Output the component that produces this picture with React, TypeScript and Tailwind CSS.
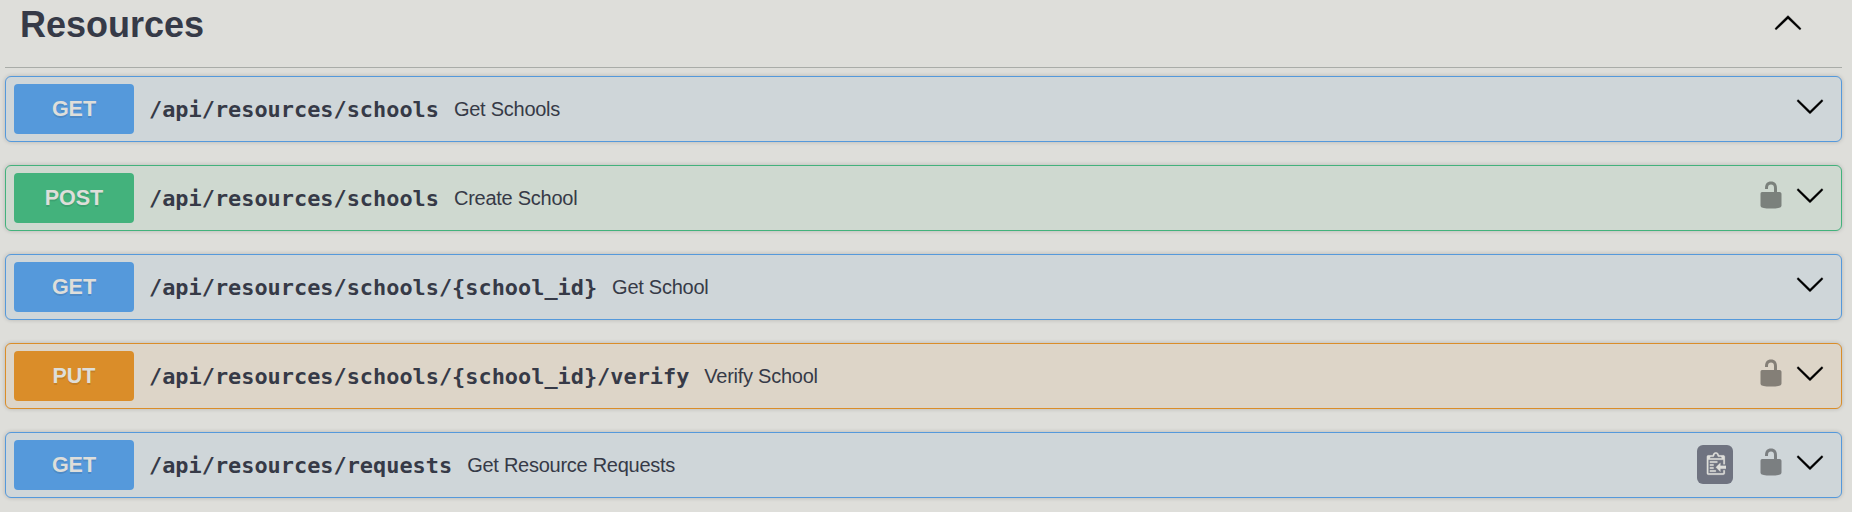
import React from 'react';

type Method = 'GET' | 'POST' | 'PUT';

interface Operation {
  method: Method;
  path: string;
  summary: string;
  locked?: boolean;
  copy?: boolean;
}

const operations: Operation[] = [
  { method: 'GET', path: '/api/resources/schools', summary: 'Get Schools' },
  { method: 'POST', path: '/api/resources/schools', summary: 'Create School', locked: true },
  { method: 'GET', path: '/api/resources/schools/{school_id}', summary: 'Get School' },
  { method: 'PUT', path: '/api/resources/schools/{school_id}/verify', summary: 'Verify School', locked: true },
  { method: 'GET', path: '/api/resources/requests', summary: 'Get Resource Requests', locked: true, copy: true },
];

const rowStyles: Record<Method, string> = {
  GET: 'border-[#5599db] bg-[#cfd6d9]',
  POST: 'border-[#43b27c] bg-[#cfd9d0]',
  PUT: 'border-[#da8d29] bg-[#ddd5c8]',
};

const badgeStyles: Record<Method, string> = {
  GET: 'bg-[#5599db]',
  POST: 'bg-[#43b27c]',
  PUT: 'bg-[#da8d29]',
};

function ArrowDown() {
  return (
    <svg viewBox="0 0 20 20" className="size-[30px] fill-black stroke-black stroke-[0.2]">
      <path d="M17.418 6.109c.272-.268.709-.268.979 0s.271.701 0 .969l-7.908 7.83c-.27.268-.707.268-.979 0l-7.908-7.83c-.27-.268-.27-.701 0-.969.271-.268.709-.268.979 0L10 13.25z" />
    </svg>
  );
}

function ArrowUp() {
  return (
    <svg viewBox="0 0 20 20" className="size-[30px] fill-black stroke-black stroke-[0.2]">
      <path d="M17.418 14.908c.272.268.709.268.979 0s.271-.701 0-.969l-7.908-7.83c-.27-.268-.707-.268-.979 0l-7.908 7.83c-.27.268-.27.701 0 .969.271.268.709.268.979 0L10 7.767z" />
    </svg>
  );
}

function Unlocked() {
  return (
    <svg viewBox="0 0 20 20" className="size-[30px] fill-black opacity-40">
      <path d="M15.8 8H14V5.6C14 2.703 12.665 1 10 1 7.334 1 6 2.703 6 5.6V6h2v-.801C8 3.754 8.797 3 10 3c1.203 0 2 .754 2 2.199V8H4c-.553 0-1 .646-1 1.199V17c0 .549.428 1.139.951 1.307l1.197.387C5.672 18.861 6.55 19 7.1 19h5.8c.549 0 1.428-.139 1.951-.307l1.196-.387c.524-.167.953-.757.953-1.306V9.199C17 8.646 16.352 8 15.8 8z" />
    </svg>
  );
}

function CopyButton() {
  return (
    <button className="mr-[23px] mt-[4px] flex h-[39px] w-9 items-center justify-center rounded-md bg-[#6f7380]">
      <svg viewBox="0 0 15 16" className="h-6 w-[22.5px] fill-[#dededa] stroke-[#dededa] stroke-[0.15]">
        <path
          transform="translate(-.1 .2)"
          d="M4 12h4v1H4v-1zm5-6H4v1h5V6zm2 3V7l-3 3 3 3v-2h4V9h-4zM6.5 8H4v1h2.5V8zM4 11h2.5v-1H4v1zm9 1h1v2c-.02.28-.11.52-.3.7-.19.18-.42.28-.7.3H3c-.55 0-1-.45-1-1V3c0-.55.45-1 1-1h3c0-1.11.89-2 2-2 1.11 0 2 .89 2 2h3c.55 0 1 .45 1 1v5h-1V5H3v9h10v-2zM4 4h8c0-.55-.45-1-1-1h-1c-.55 0-1-.45-1-1s-.45-1-1-1-1 .45-1 1-.45 1-1 1H5c-.55 0-1 .45-1 1z"
        />
      </svg>
    </button>
  );
}

function OperationRow({ op }: { op: Operation }) {
  return (
    <div
      className={`flex h-[66px] items-center rounded-md border pl-2 pr-4 shadow-[0_0_4px_rgba(0,0,0,0.19)] ${rowStyles[op.method]}`}
    >
      <div
        className={`flex h-[50px] w-[120px] items-center justify-center rounded-[4px] text-[21.5px] font-bold text-[#dededa] [text-shadow:0_2px_0_rgba(0,0,0,0.1)] ${badgeStyles[op.method]}`}
      >
        {op.method}
      </div>
      <span className="ml-[15px] mt-px whitespace-pre font-['DejaVu_Sans_Mono',monospace] text-[21.9px] font-bold leading-none">
        {op.path}
      </span>
      <span className="ml-[15px] pb-px text-[20px] leading-none tracking-[-0.26px]">{op.summary}</span>
      <div className="ml-auto flex items-center pb-[6px]">
        {op.copy && <CopyButton />}
        {op.locked && <Unlocked />}
        <div className="ml-[9px]">
          <ArrowDown />
        </div>
      </div>
    </div>
  );
}

export default function App() {
  return (
    <main className="h-[512px] overflow-hidden bg-[#dededa] pl-[5px] pr-[10px] font-['Liberation_Sans',Arial,sans-serif] text-[#363a47]">
      <header className="flex h-[68px] items-start justify-between border-b border-[#a9aca8] pl-[15px] pr-[39px]">
        <h2 className="pt-[4px] text-[36px] font-bold leading-[42px]">Resources</h2>
        <div className="pt-[7px]">
          <ArrowUp />
        </div>
      </header>
      <section className="flex flex-col gap-[23px] pt-2">
        {operations.map((op) => (
          <OperationRow key={`${op.method} ${op.path}`} op={op} />
        ))}
      </section>
    </main>
  );
}
